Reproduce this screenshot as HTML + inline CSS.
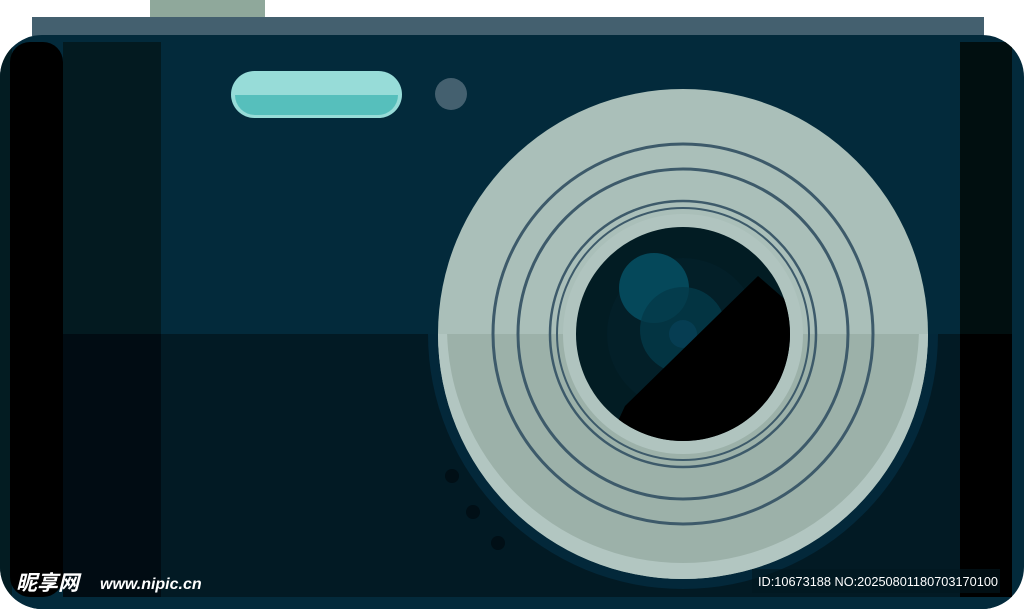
<!DOCTYPE html>
<html><head><style>html,body{margin:0;padding:0;background:#fff;width:1024px;height:609px;overflow:hidden}</style></head>
<body>
<svg width="1024" height="609" viewBox="0 0 1024 609" xmlns="http://www.w3.org/2000/svg" style="display:block">
<defs>
<clipPath id="body"><rect x="0" y="35" width="1024" height="574" rx="42"/></clipPath>
<clipPath id="inner"><circle cx="683" cy="334" r="107"/></clipPath>
<clipPath id="bot"><rect x="0" y="334" width="1024" height="275"/></clipPath>
</defs>
<rect x="150" y="0" width="115" height="18" fill="#8fa89b"/>
<rect x="32" y="17" width="952" height="19" fill="#44606f"/>
<g clip-path="url(#body)">
<rect x="0" y="35" width="1024" height="574" fill="#032a3b"/>
<rect x="0" y="35" width="12" height="574" fill="#031c22"/>
<rect x="10" y="42" width="53" height="555" rx="20" fill="#000"/>
<rect x="63" y="42" width="98" height="292" fill="#031a20"/>
<rect x="63" y="334" width="98" height="263" fill="#010c13"/>
<rect x="161" y="334" width="799" height="263" fill="#021a24"/>
<rect x="960" y="42" width="52" height="555" fill="#010f10"/>
<rect x="960" y="334" width="52" height="263" fill="#000"/>
<rect x="10" y="597" width="1004" height="12" fill="#032a3b"/>
</g>
<rect x="231" y="71" width="171" height="47" rx="23.5" fill="#97dcd8"/>
<path d="M235 95 H398 A20 20 0 0 1 378 115 H255 A20 20 0 0 1 235 95 Z" fill="#56bfbc"/>
<circle cx="451" cy="94" r="16" fill="#44606f"/>
<circle cx="452" cy="476" r="7" fill="#010f16"/>
<circle cx="473" cy="512" r="7" fill="#010f16"/>
<circle cx="498" cy="543" r="7" fill="#010f16"/>
<circle cx="683" cy="334" r="255" fill="#03283a" clip-path="url(#bot)"/>
<circle cx="683" cy="334" r="245" fill="#aabfb9"/>
<g clip-path="url(#bot)"><circle cx="683" cy="334" r="245" fill="#b2c6c1"/><circle cx="683" cy="327" r="236" fill="#9cb1a9"/></g>
<g fill="none" stroke="#3d5a6a" stroke-width="3">
<circle cx="683" cy="334" r="190"/>
<circle cx="683" cy="334" r="165"/>
<circle cx="683" cy="334" r="133" stroke-width="2.5"/>
<circle cx="683" cy="334" r="126" stroke-width="2"/>
</g>
<circle cx="683" cy="334" r="120" fill="#b0c4bf"/>
<circle cx="683" cy="334" r="107" fill="#021c23"/>
<g clip-path="url(#inner)">
<circle cx="683" cy="334" r="76" fill="#031f28"/>
<circle cx="654" cy="288" r="35" fill="#05485a"/>
<circle cx="683" cy="330" r="43" fill="#043a48" opacity="0.8"/>
<circle cx="683" cy="334" r="14" fill="#063d52"/>
<polygon points="625,406 758,276 820,330 820,460 600,460" fill="#000"/>
</g>
<rect x="752" y="569" width="248" height="24" fill="#021820" opacity="0.6"/>
<text x="16" y="590" font-family="'Liberation Sans','Noto Sans CJK SC',sans-serif" font-size="21" font-weight="bold" font-style="italic" fill="#fff">昵享网</text>
<text x="100" y="589" font-family="'Liberation Sans',sans-serif" font-size="16" font-weight="bold" font-style="italic" fill="#fff">www.nipic.cn</text>
<text x="758" y="586" font-family="'Liberation Sans',sans-serif" font-size="12.5" fill="#fff" textLength="240" lengthAdjust="spacingAndGlyphs">ID:10673188 NO:20250801180703170100</text>
</svg>
</body></html>
